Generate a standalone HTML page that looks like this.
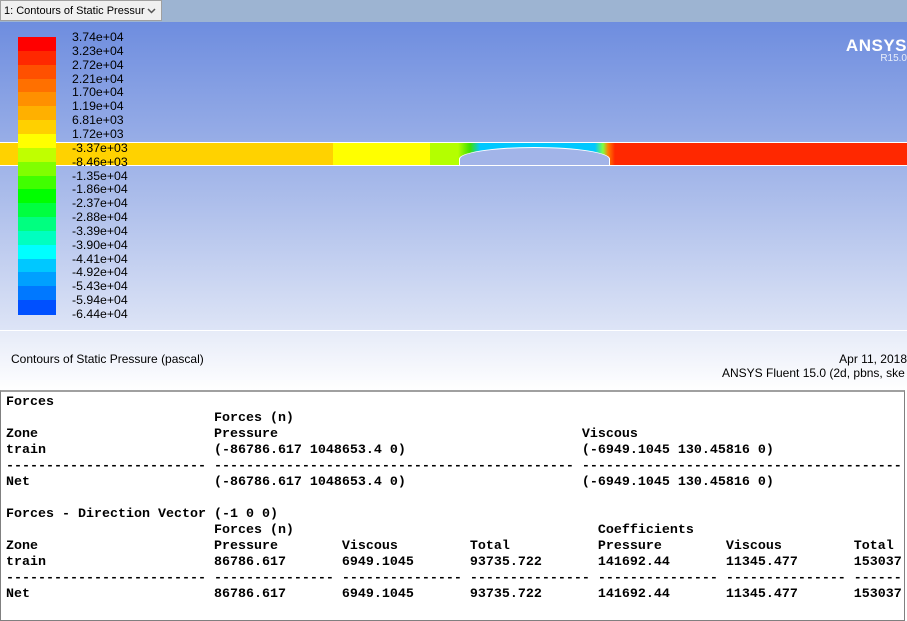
<!DOCTYPE html>
<html><head><style>
body{margin:0;width:907px;height:621px;overflow:hidden;position:relative;font-family:"Liberation Sans",sans-serif;background:#fff}
#top{position:absolute;left:0;top:0;width:907px;height:22px;background:#9db4d2}
#tab{position:absolute;left:0;top:0;width:162px;height:21px;background:#f0f0f0;border:1px solid #a0a0a0;font-size:11px;line-height:20px;padding-left:3px;box-sizing:border-box;white-space:nowrap;overflow:hidden}
#gfx{position:absolute;left:0;top:22px;width:907px;height:308px;background:linear-gradient(#6e8ddf,#a9bbea 55%,#dde4f6)}
#bot{position:absolute;left:0;top:330px;width:907px;height:60px;background:linear-gradient(#e6ebf8,#ffffff);border-top:1px solid #fff}
.lab{position:absolute;left:72px;font-size:12.3px;line-height:13px;color:#000}
.bnd{position:absolute;left:18px;width:38px}
#con{position:absolute;left:0;top:390px;width:905px;height:231px;border:1px solid #808080;border-top:2px solid #a0a0a0;background:#fff;box-sizing:border-box;overflow:hidden}
pre{margin:0;position:absolute;left:5px;top:3px;font-family:"Liberation Mono",monospace;font-weight:bold;font-size:13.33px;line-height:16px;color:#000}
</style></head><body>
<div id="top"><div id="tab">1: Contours of Static Pressur<svg style="position:absolute;right:5px;top:7px" width="9" height="6" viewBox="0 0 9 6"><path d="M1 1 L4.5 4.5 L8 1" fill="none" stroke="#555" stroke-width="1.5"/></svg></div></div>
<div id="gfx">
<div style="position:absolute;right:0;top:14px;color:#fff;font-weight:bold;font-size:17px;letter-spacing:0.5px">ANSYS</div>
<div style="position:absolute;right:0;top:31px;color:#e8eefa;font-size:10px">R15.0</div>
<div style="position:absolute;left:0;top:120px;width:907px;height:24px;border-top:1px solid #fff;border-bottom:1px solid #fff;box-sizing:border-box;background:linear-gradient(90deg,#ffd200 0,#ffd200 333px,#ffff00 333px,#ffff00 430px,#b4ff00 430px,#b4ff00 458px,#40e000 470px,#00c8ff 480px,#00c8ff 595px,#80ff40 603px,#ff8000 608px,#ff2800 615px,#ff2800 100%)"></div>
<div style="position:absolute;left:459px;top:125px;width:151px;height:18px;background:#a2b4e8;border:1px solid #fff;border-bottom:none;border-radius:75px/12px 12px 0 0;box-sizing:border-box"></div>
</div>
<div id="legend"></div>
<div id="bot">
<div style="position:absolute;left:11px;top:21px;font-size:12px">Contours of Static Pressure (pascal)</div>
<div style="position:absolute;right:0;top:21px;font-size:12px;white-space:nowrap">Apr 11, 2018</div>
<div style="position:absolute;left:722px;top:35px;font-size:12px;white-space:nowrap">ANSYS Fluent 15.0 (2d, pbns, ske</div>
</div>
<div id="con"><pre>Forces
                          Forces (n)
Zone                      Pressure                                      Viscous
train                     (-86786.617 1048653.4 0)                      (-6949.1045 130.45816 0)
------------------------- --------------------------------------------- ----------------------------------------
Net                       (-86786.617 1048653.4 0)                      (-6949.1045 130.45816 0)

Forces - Direction Vector (-1 0 0)
                          Forces (n)                                      Coefficients
Zone                      Pressure        Viscous         Total           Pressure        Viscous         Total
train                     86786.617       6949.1045       93735.722       141692.44       11345.477       153037
------------------------- --------------- --------------- --------------- --------------- --------------- ------
Net                       86786.617       6949.1045       93735.722       141692.44       11345.477       153037</pre></div>
<script>
var c=["#ff0000","#ff2800","#ff5000","#ff7000","#ff9000","#ffb000","#ffd000","#ffff00","#c0ff00","#80ff00","#40ff00","#00ff00","#00ff40","#00ff80","#00ffc0","#00ffff","#00c8ff","#00a0ff","#0078ff","#0050ff","#0028ff"];
var l=["3.74e+04","3.23e+04","2.72e+04","2.21e+04","1.70e+04","1.19e+04","6.81e+03","1.72e+03","-3.37e+03","-8.46e+03","-1.35e+04","-1.86e+04","-2.37e+04","-2.88e+04","-3.39e+04","-3.90e+04","-4.41e+04","-4.92e+04","-5.43e+04","-5.94e+04","-6.44e+04"];
var h="",n=20,t=37,H=(314-37)/n;
for(var i=0;i<n;i++){h+='<div class="bnd" style="top:'+(t+i*H)+'px;height:'+(H+0.6)+'px;background:'+c[i]+'"></div>';}
for(var i=0;i<21;i++){h+='<div class="lab" style="top:'+(31+i*13.85)+'px">'+l[i]+'</div>';}
document.getElementById('legend').innerHTML=h;
</script>
</body></html>
